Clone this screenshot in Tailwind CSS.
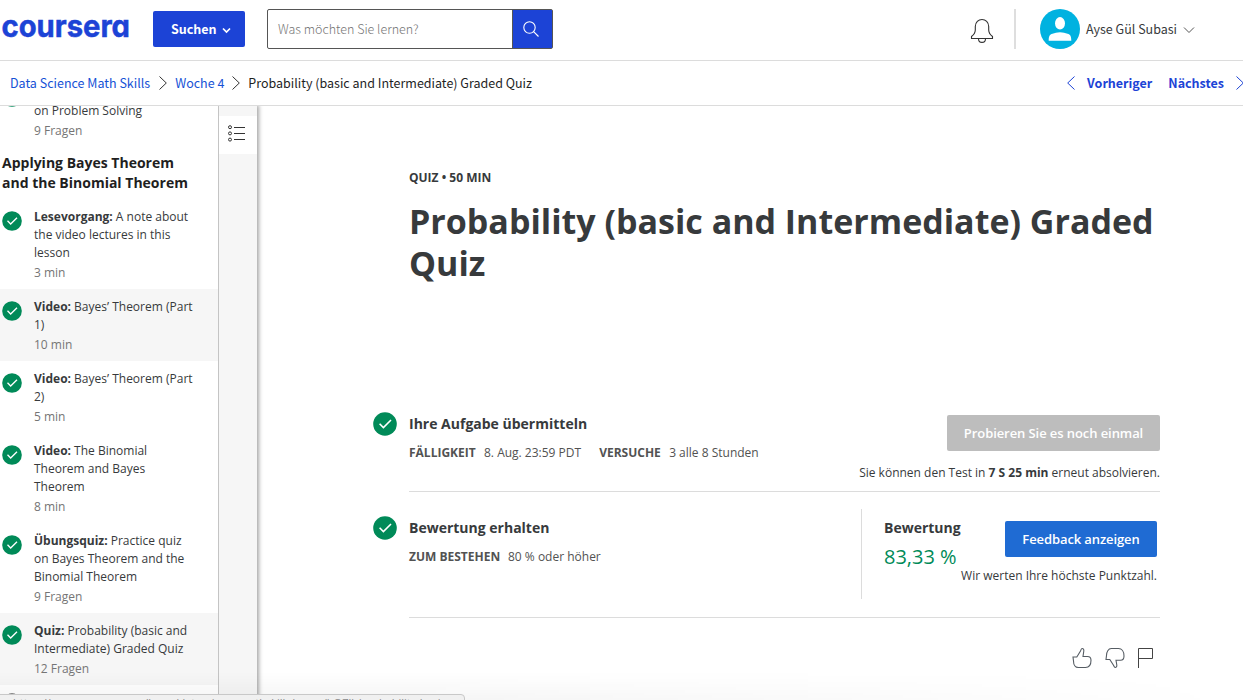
<!DOCTYPE html>
<html lang="de">
<head>
<meta charset="utf-8">
<title>Probability (basic and Intermediate) Graded Quiz | Coursera</title>
<script src="https://cdn.jsdelivr.net/npm/@tailwindcss/browser@4"></script>
</head>
<body class="bg-white font-['Open_Sans',sans-serif] text-[#373a3c]">
<svg class="hidden">
  <symbol id="check" viewBox="0 0 24 24"><circle cx="12" cy="12" r="11.800" fill="#008a58"/><path d="M6.600 11.800l3.800 3.800 7.600-7.600" fill="none" stroke="#fff" stroke-width="1.600"/></symbol>
</svg>
<div class="relative flex h-[700px] w-[1243px] flex-col overflow-hidden">
  <header class="flex h-[61px] shrink-0 items-start border-b border-[#dcdcdc] font-['Noto_Sans_CJK_SC',sans-serif]">
    <svg class="mt-2 ml-0.5 h-9 w-[128px] overflow-visible" viewBox="0 0 128 36">
      <text x="-0.500" y="28.800" textLength="128.500" lengthAdjust="spacingAndGlyphs" fill="#1c43d6" stroke="#1c43d6" stroke-width="0.500" class="font-['Inter',sans-serif] text-[31px] font-bold [font-feature-settings:'cv11']">coursera</text>
    </svg>
    <button class="mt-[11px] ml-[23px] flex h-9 w-[92px] items-center rounded-[2px] bg-[#1c43d6] pl-[18px] text-[12.5px] font-bold text-white"><span class="mt-px w-[46px] text-left whitespace-nowrap">Suchen</span>
      <svg class="mt-0.5 ml-[5px] size-[9px]" viewBox="0 0 9 9"><path d="M1 2.500l3.500 3.500L8 2.500" fill="none" stroke="#fff" stroke-width="1.700"/></svg>
    </button>
    <div class="mt-[9px] ml-[22px] flex h-10 w-[286px] rounded-[2px] border border-[#555]">
      <span class="flex-1 pl-2.5 text-[12.5px] leading-[37px] font-light text-[#757575]">Was möchten Sie lernen?</span>
      <span class="flex w-10 items-center justify-center border-l border-[#555] bg-[#1c43d6]">
        <svg class="mr-1 size-4" viewBox="0 0 16 16" fill="none" stroke="#fff" stroke-width="1.100"><circle cx="6.500" cy="6.500" r="5.700"/><path d="M10.600 10.600l4.900 4.900"/></svg>
      </span>
    </div>
    <svg class="mt-[18px] ml-[417px] h-[26px] w-6" viewBox="0 0 24 26" fill="none" stroke="#333" stroke-width="1.100"><path d="M1.500 20.500h21v-2c-1.800-1.400-3.800-4-3.800-6.500V8.500C18.700 4 15.500 1.500 12 1.500S5.300 4 5.300 8.500V12c0 2.500-2 5.100-3.800 6.500z"/><path d="M8.500 20.700c0 2.300 1.500 3.700 3.500 3.700s3.500-1.400 3.500-3.700"/></svg>
    <div class="mt-[9px] ml-5 h-10 w-[2px] bg-[#dedede]"></div>
    <svg class="mt-[9px] ml-6 size-10" viewBox="0 0 40 40"><circle cx="20" cy="20" r="20" fill="#00b2e0"/><ellipse cx="20" cy="14.300" rx="5" ry="6.200" fill="#fff"/><path d="M8.700 31.700c0-4.500 1-6.200 3.800-6.900 2.300-.6 4.500-1.600 7.500-1.600s5.200 1 7.500 1.600c2.800.7 3.800 2.400 3.800 6.900z" fill="#fff"/></svg>
    <span class="mt-[9px] ml-[6px] text-[12.5px] leading-[39px]">Ayse Gül Subasi</span>
    <svg class="mt-6 ml-1.5 h-3 w-3" viewBox="0 0 12 12"><path d="M1 3.500l5 5 5-5" fill="none" stroke="#555" stroke-width="1"/></svg>
  </header>

  <nav class="flex h-[45px] shrink-0 items-center border-b border-[#dcdcdc] pl-2.5 font-['Noto_Sans_CJK_SC',sans-serif] text-[12.5px] text-[#1f1f1f]">
    <span class="text-[#1652d6]">Data Science Math Skills</span>
    <svg class="mr-2 ml-[9px] h-4 w-2" viewBox="0 0 8 16"><path d="M.5 1.500L7.300 8 .5 14.500" fill="none" stroke="#333"/></svg>
    <span class="text-[#1652d6]">Woche 4</span>
    <svg class="mx-2 h-4 w-2" viewBox="0 0 8 16"><path d="M.5 1.500L7.300 8 .5 14.500" fill="none" stroke="#333"/></svg>
    <span>Probability (basic and Intermediate) Graded Quiz</span>
    <div class="-mr-px ml-auto flex items-center font-bold text-[#1c43d6]">
      <svg class="mr-3 h-4 w-2" viewBox="0 0 8 16"><path d="M7.500 1.500L.7 8l6.800 6.500" fill="none" stroke="#1c43d6"/></svg>
      <span>Vorheriger</span><span class="ml-4">Nächstes</span>
      <svg class="ml-3 h-4 w-2" viewBox="0 0 8 16"><path d="M.5 1.500L7.300 8 .5 14.500" fill="none" stroke="#1c43d6"/></svg>
    </div>
  </nav>

  <div class="flex min-h-0 flex-1">
    <aside class="w-[219px] shrink-0 overflow-hidden border-r border-[#c4c4c4] text-[12px] leading-[18px]">
      <div class="-mt-[31px] flex h-[72px] gap-3 pt-[9px] pl-0.5">
        <svg class="mt-[3px] size-5 shrink-0"><use href="#check"/></svg>
        <div class="pt-[18px]"><p>on Problem Solving</p><p class="mt-0.5 text-[#757575]">9 Fragen</p></div>
      </div>
      <h2 class="py-1.5 pl-0.5 text-[14px] leading-5 font-bold text-[#1f1f1f]">Applying Bayes Theorem<br>and the Binomial Theorem</h2>
      <div class="flex h-[90px] gap-3 pt-[9px] pl-0.5">
        <svg class="mt-[3px] size-5 shrink-0"><use href="#check"/></svg>
        <div><p><b>Lesevorgang:</b> A note about<br>the video lectures in this<br>lesson</p><p class="mt-0.5 text-[#757575]">3 min</p></div>
      </div>
      <div class="flex h-[72px] gap-3 bg-[#f6f6f6] pt-[9px] pl-0.5">
        <svg class="mt-[3px] size-5 shrink-0"><use href="#check"/></svg>
        <div><p><b>Video:</b> Bayes’ Theorem (Part<br>1)</p><p class="mt-0.5 text-[#757575]">10 min</p></div>
      </div>
      <div class="flex h-[72px] gap-3 pt-[9px] pl-0.5">
        <svg class="mt-[3px] size-5 shrink-0"><use href="#check"/></svg>
        <div><p><b>Video:</b> Bayes’ Theorem (Part<br>2)</p><p class="mt-0.5 text-[#757575]">5 min</p></div>
      </div>
      <div class="flex h-[90px] gap-3 pt-[9px] pl-0.5">
        <svg class="mt-[3px] size-5 shrink-0"><use href="#check"/></svg>
        <div><p><b>Video:</b> The Binomial<br>Theorem and Bayes<br>Theorem</p><p class="mt-0.5 text-[#757575]">8 min</p></div>
      </div>
      <div class="flex h-[90px] gap-3 pt-[9px] pl-0.5">
        <svg class="mt-[3px] size-5 shrink-0"><use href="#check"/></svg>
        <div><p><b>Übungsquiz:</b> Practice quiz<br>on Bayes Theorem and the<br>Binomial Theorem</p><p class="mt-0.5 text-[#757575]">9 Fragen</p></div>
      </div>
      <div class="flex h-[72px] gap-3 bg-[#f6f6f6] pt-[9px] pl-0.5">
        <svg class="mt-[3px] size-5 shrink-0"><use href="#check"/></svg>
        <div><p><b>Quiz:</b> Probability (basic and<br>Intermediate) Graded Quiz</p><p class="mt-0.5 text-[#757575]">12 Fragen</p></div>
      </div>
      <div class="pt-2 pl-1"><div class="size-4 rounded-full border border-[#888]"></div></div>
    </aside>
    <div class="w-[38px] shrink-0 bg-[#f6f6f6] pt-2.5 shadow-[1px_0_4px_1px_rgba(0,0,0,0.35)] [clip-path:inset(0_-10px_0_0)]">
      <div class="flex h-[38px] items-center bg-white pl-[9px]">
        <svg class="-mt-[5px] h-[18px] w-[18px]" viewBox="0 0 18 18" fill="none" stroke="#333"><circle cx="2" cy="3.200" r="1.500"/><circle cx="2" cy="9.400" r="1.500"/><circle cx="2" cy="15.600" r="1.500"/><path d="M6 3.500h11M6 9.500h11M6 15.500h11"/></svg>
      </div>
    </div>
    <main class="ml-[116px] w-[787px] pt-[63px]">
      <div class="pl-9">
        <p class="text-[12px] leading-[18px] font-bold">QUIZ • 50 MIN</p>
        <h1 class="mt-[13px] w-[760px] text-[34px] leading-[42px] font-bold whitespace-nowrap">Probability (basic and Intermediate) Graded<br>Quiz</h1>
      </div>
      <section class="mt-[128px] flex h-[80px]">
        <svg class="size-6 shrink-0"><use href="#check"/></svg>
        <div class="ml-3 flex flex-1 justify-between border-b border-[#dcdcdc]">
          <div>
            <h3 class="text-[14px] leading-6 font-bold">Ihre Aufgabe übermitteln</h3>
            <p class="mt-2 text-[12px] leading-[18px] whitespace-nowrap text-[#525252]"><b class="inline-block w-[67px] font-bold">FÄLLIGKEIT</b><span class="ml-2">8. Aug. 23:59 PDT</span><b class="ml-[18px] inline-block w-[62px] font-bold">VERSUCHE</b><span class="ml-2">3 alle 8 Stunden</span></p>
          </div>
          <div class="flex flex-col items-end pt-[3px]">
            <button class="h-9 w-[213px] rounded-[2px] bg-[#bdbdbd] pt-0.5 text-[13px] font-semibold tracking-[-0.08px] text-white">Probieren Sie es noch einmal</button>
            <p class="mt-[13px] text-[12px] leading-[18px] whitespace-nowrap">Sie können den Test in <b>7 S 25 min</b> erneut absolvieren.</p>
          </div>
        </div>
      </section>
      <section class="flex h-[126px] pt-6">
        <svg class="size-6 shrink-0"><use href="#check"/></svg>
        <div class="ml-3 flex flex-1 justify-between border-b border-[#dcdcdc]">
          <div>
            <h3 class="text-[14px] leading-6 font-bold">Bewertung erhalten</h3>
            <p class="mt-2 text-[12px] leading-[18px] whitespace-nowrap text-[#525252]"><b class="inline-block w-[91px] font-bold">ZUM BESTEHEN</b><span class="ml-2">80 % oder höher</span></p>
          </div>
          <div class="-mt-[7px] flex h-[90px] w-[299px] border-l border-[#dcdcdc] pt-[7px] pl-[22px]">
            <div class="w-[76px]">
              <h3 class="text-[14px] leading-6 font-bold">Bewertung</h3>
              <p class="text-[20px] leading-[34px] whitespace-nowrap text-[#008a58]">83,33 %</p>
            </div>
            <div class="mt-[5px] flex w-[197px] flex-col items-end">
              <button class="h-9 w-[152px] rounded-[2px] bg-[#1f6bd3] pt-0.5 text-[13px] font-semibold tracking-[-0.1px] text-white">Feedback anzeigen</button>
              <p class="mt-[10px] text-[12px] leading-[18px] whitespace-nowrap">Wir werten Ihre höchste Punktzahl.</p>
            </div>
          </div>
        </div>
      </section>
      <div class="mt-[29px] flex justify-end gap-[13px] pr-[6px]">
        <svg class="h-6 w-5" viewBox="0 0 20 24" fill="none" stroke="#555c63" stroke-width="1.100"><path d="M1 10h3.800L8.500 4c.5-1.300.7-2.500 1.800-2.500s1.700 1 1.500 2.500L11 9.500h4.500c2.300 0 3.500 1.500 3.500 3.800 0 4.400-2.200 7.200-5.500 7.200H6.300C3.300 20.500 1.500 17.500 1.500 14z"/></svg>
        <svg class="h-6 w-5" viewBox="0 0 20 24" fill="none" stroke="#555c63" stroke-width="1.100"><path d="M1 12.500h3.800l3.700 5.800c.5 1.100.8 2.200 1.800 2.200s1.700-1 1.500-2.500l-.8-4.700h4.500c2.300 0 3.500-1.800 3.500-4.300C19 4.500 16.800 1.500 13.500 1.500H6.300C3.300 1.500 1.500 5 1.500 8.500z"/></svg>
        <svg class="h-6 w-4" viewBox="0 0 16 24" fill="none" stroke="#444"><path d="M.5 21V1.500h14v10H.5"/></svg>
      </div>
    </main>
  </div>
  <div class="absolute inset-x-0 bottom-0 h-7 bg-linear-to-b from-black/0 to-black/4 [mask-image:linear-gradient(to_right,#000_30%,transparent)]"></div>
  <div class="absolute top-[694px] -left-1 h-6 w-[469px] overflow-hidden rounded-tr-[4px] border border-[#c8c8c8] bg-[#f0f0f0] pl-4 text-[11px] leading-[16px] whitespace-nowrap text-[#888]">https://www.coursera.org/learn/datasciencemathskills/exam/bO7lk/probability-basic</div>
</div>
</body>
</html>
